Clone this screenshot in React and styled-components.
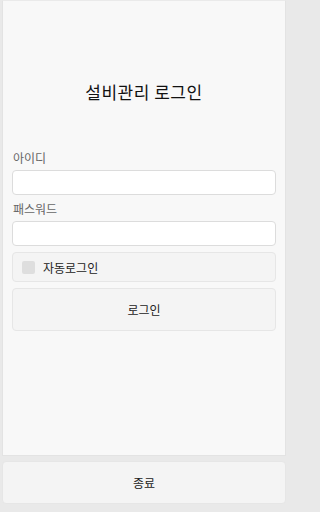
import React from "react";
import styled, { createGlobalStyle } from "styled-components";

const Global = createGlobalStyle`
  html, body {
    margin: 0;
    padding: 0;
    background: #e9e9e9;
    font-family: "Noto Sans CJK KR", "Noto Sans", sans-serif;
  }
`;

const Page = styled.div`
  width: 288px;
  height: 512px;
  display: flex;
  flex-direction: column;
  box-sizing: border-box;
`;

const Panel = styled.div`
  margin: 0 2px;
  height: 456px;
  box-sizing: border-box;
  background: #f8f8f8;
  border: 1px solid #e3e3e3;
  border-top-color: #eaeaea;
  padding: 0 9px;
  display: flex;
  flex-direction: column;
`;

const Title = styled.h1`
  margin: 77px 0 0;
  height: 28px;
  line-height: 28px;
  font-size: 17px;
  font-weight: 400;
  color: #111;
  text-align: center;
  letter-spacing: 0.5px;
`;

const Label = styled.div`
  margin-top: ${(p) => p.$top}px;
  font-size: 12px;
  line-height: 16px;
  color: #666;
  padding-left: 1px;
`;

const Input = styled.input`
  display: block;
  box-sizing: border-box;
  width: 100%;
  height: 25px;
  margin-top: 4px;
  background: #fff;
  border: 1px solid #dcdcdc;
  border-radius: 4px;
  outline: none;
`;

const CheckRow = styled.label`
  display: flex;
  align-items: center;
  gap: 8px;
  box-sizing: border-box;
  height: 30px;
  margin-top: 6px;
  padding: 0 9px;
  background: #f4f4f4;
  border: 1px solid #e6e6e6;
  border-radius: 4px;
  font-size: 12px;
  color: #222;
`;

const Box = styled.span`
  width: 13px;
  height: 13px;
  border-radius: 2px;
  background: #dedede;
`;

const Button = styled.button`
  display: block;
  box-sizing: border-box;
  width: 100%;
  height: ${(p) => p.$h}px;
  margin-top: ${(p) => p.$top || 0}px;
  background: #f4f4f4;
  border: 1px solid #e6e6e6;
  border-radius: 4px;
  font-family: inherit;
  font-size: 12px;
  color: #222;
`;

const Footer = styled.div`
  padding: 5px 2px 0;
`;

export default function App() {
  return (
    <Page>
      <Global />
      <Panel>
        <Title>설비관리 로그인</Title>
        <Label $top={44}>아이디</Label>
        <Input type="text" />
        <Label $top={6}>패스워드</Label>
        <Input type="password" />
        <CheckRow>
          <Box />
          자동로그인
        </CheckRow>
        <Button $h={43} $top={6}>로그인</Button>
      </Panel>
      <Footer>
        <Button $h={43}>종료</Button>
      </Footer>
    </Page>
  );
}
